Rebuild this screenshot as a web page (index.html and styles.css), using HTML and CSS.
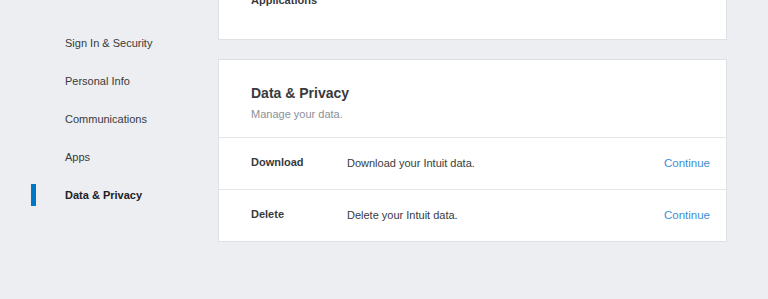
FILE: index.html
```html
<!DOCTYPE html>
<html>
<head>
<meta charset="utf-8">
<link rel="stylesheet" href="styles.css">
</head>
<body>
<div class="page">
  <nav class="sidebar">
    <a class="nav-item">Sign In &amp; Security</a>
    <a class="nav-item">Personal Info</a>
    <a class="nav-item">Communications</a>
    <a class="nav-item">Apps</a>
    <a class="nav-item active">Data &amp; Privacy</a>
  </nav>
  <main class="main">
    <section class="card card-apps">
      <div class="apps-label">Applications</div>
    </section>
    <section class="card">
      <header class="card-head">
        <h2 class="card-title">Data &amp; Privacy</h2>
        <p class="card-sub">Manage your data.</p>
      </header>
      <div class="row">
        <div class="row-label">Download</div>
        <div class="row-desc">Download your Intuit data.</div>
        <a class="row-link">Continue</a>
      </div>
      <div class="row">
        <div class="row-label">Delete</div>
        <div class="row-desc">Delete your Intuit data.</div>
        <a class="row-link">Continue</a>
      </div>
    </section>
  </main>
</div>
</body>
</html>
```
FILE: styles.css
```css
* { box-sizing: border-box; }
html, body {
  margin: 0;
  padding: 0;
  background: #eceef1;
  font-family: "Liberation Sans", Arial, sans-serif;
  color: #393a3d;
  overflow: hidden;
  height: 299px;
}
.page {
  display: flex;
  width: 768px;
}
.sidebar {
  width: 218px;
  flex: none;
  display: flex;
  flex-direction: column;
  gap: 16px;
  padding-top: 32px;
}
.nav-item {
  position: relative;
  display: flex;
  align-items: center;
  height: 22px;
  padding-left: 65px;
  font-size: 11px;
  color: #393a3d;
}
.nav-item.active {
  font-weight: bold;
  color: #1f2023;
}
.nav-item.active::before {
  content: "";
  position: absolute;
  left: 31px;
  top: 0;
  width: 5px;
  height: 22px;
  background: #0077c5;
}
.main {
  width: 509px;
  flex: none;
  display: flex;
  flex-direction: column;
  gap: 19px;
  margin-top: -8px;
}
.card {
  background: #fff;
  border: 1px solid #dde0e4;
}
.card-apps {
  border-top: none;
  padding: 0 32px 31px;
}
.apps-label {
  font-size: 11px;
  font-weight: bold;
  line-height: 16px;
}
.card-head {
  padding: 23px 32px 15px;
}
.card-title {
  margin: 0;
  font-size: 14px;
  font-weight: bold;
  line-height: 20px;
  color: #393a3d;
}
.card-sub {
  margin: 3px 0 0;
  font-size: 11px;
  line-height: 16px;
  color: #8d9096;
}
.row {
  display: flex;
  align-items: center;
  height: 52px;
  border-top: 1px solid #e3e5e8;
  padding: 0 16px 1px 32px;
}
.row-label {
  width: 96px;
  flex: none;
  font-size: 11px;
  font-weight: bold;
  line-height: 16px;
  margin-top: -2px;
}
.row-desc {
  flex: 1;
  font-size: 11px;
  line-height: 16px;
  color: #393a3d;
}
.row-link {
  font-size: 11.5px;
  line-height: 16px;
  color: #3b8fd6;
}
```
